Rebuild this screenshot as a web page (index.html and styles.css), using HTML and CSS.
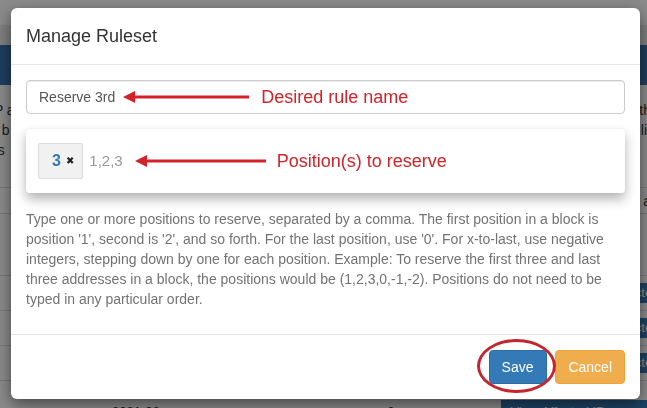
FILE: index.html
```html
<!DOCTYPE html>
<html lang="en">
<head>
    <meta charset="UTF-8">
    <meta name="viewport" content="width=device-width, initial-scale=1.0">
    <title>Manage Ruleset</title>
    <link rel="stylesheet" href="styles.css">
</head>
<body>
    <!-- page behind the modal -->
    <div class="page">
        <div class="topbar"></div>
        <div class="subbar"></div>
        <div class="navbar"></div>
        <div class="intro">
            <div class="intro-line"><span class="cut-left">IP a</span><span class="cut-right">th</span></div>
            <div class="intro-line"><span class="cut-left">   b</span><span class="cut-right li">li</span></div>
            <div class="intro-line"><span class="cut-left">es</span><span></span></div>
        </div>
        <div class="table">
            <div class="row row-head"><span></span><span class="cell-right">a</span></div>
            <div class="row row-tall"></div>
            <div class="row"><span></span><span class="view-btn">View Affected IP Blocks</span></div>
            <div class="row"><span></span><span class="view-btn">View Affected IP Blocks</span></div>
            <div class="row"><span></span><span class="view-btn">View Affected IP Blocks</span></div>
            <div class="row row-last">
                <span class="date">2021-08-10T17:04:15+0000</span>
                <span class="count">2</span>
                <span class="view-btn">View Affected IP Blocks</span>
            </div>
        </div>
    </div>

    <div class="backdrop"></div>

    <div class="modal">
        <div class="modal-dialog">
            <div class="modal-header">
                <h4 class="modal-title">Manage Ruleset</h4>
            </div>
            <div class="modal-body">
                <div class="form-control">
                    <span class="value">Reserve 3rd</span>
                    <svg class="arrow arrow-name" width="126" height="14" viewBox="0 0 126 14">
                        <polygon points="0,7 12,1 12,13" fill="#d2232a"/>
                        <rect x="10" y="5.5" width="116" height="3" fill="#d2232a"/>
                    </svg>
                    <span class="note">Desired rule name</span>
                </div>

                <div class="tag-box">
                    <span class="tag"><span class="tag-num">3</span><span class="tag-x">✖</span></span>
                    <span class="tag-input">1,2,3</span>
                    <svg class="arrow arrow-pos" width="131" height="14" viewBox="0 0 131 14">
                        <polygon points="0,7 12,1 12,13" fill="#d2232a"/>
                        <rect x="10" y="5.5" width="121" height="3" fill="#d2232a"/>
                    </svg>
                    <span class="note note-pos">Position(s) to reserve</span>
                </div>

                <p class="help-block">Type one or more positions to reserve, separated by a comma. The first position in a block is position '1', second is '2', and so forth. For the last position, use '0'. For x-to-last, use negative integers, stepping down by one for each position. Example: To reserve the first three and last three addresses in a block, the positions would be (1,2,3,0,-1,-2). Positions do not need to be typed in any particular order.</p>
            </div>
            <div class="modal-footer">
                <span class="save-wrap">
                    <button type="button" class="btn btn-primary">Save</button>
                    <span class="circle"></span>
                </span>
                <button type="button" class="btn btn-warning">Cancel</button>
            </div>
        </div>
    </div>
</body>
</html>
```

FILE: styles.css
```css
* { box-sizing: border-box; }
html, body { margin: 0; height: 100%; overflow: hidden; }
body { font-family: "Liberation Sans", Arial, sans-serif; font-size: 14px; line-height: 20px; color: #333; background: #fff; }

/* page behind */
.page { width: 647px; }
.topbar { height: 25px; background: #fff; }
.subbar { height: 20px; background: #ececec; }
.navbar { height: 40px; background: #3873b0; }
.intro { padding-top: 15px; }
.intro-line { display: flex; justify-content: space-between; height: 20px; white-space: pre; }
.cut-left { margin-left: -10px; }
.cut-right { margin-right: -4px; }
.cut-right.li { margin-right: 0; }
.table { margin-top: 27px; border-top: 1px solid #ddd; }
.row { display: flex; justify-content: space-between; align-items: center; height: 35px; border-bottom: 1px solid #ddd; }
.row-head { height: 26px; }
.row-tall { height: 62px; }
.row-last { height: 45px; border-bottom: none; justify-content: flex-start; align-items: flex-start; padding-top: 19px; }
.cell-right { margin-right: -4px; color: #333; }
.view-btn { background: #337ab7; color: #fff; font-size: 13px; padding: 0 10px; height: 20px; line-height: 20px; margin-right: -80px; }
.date { margin-left: 112px; font-size: 13px; line-height: 24px; }
.count { margin-left: 125px; font-size: 13px; line-height: 24px; }
.row-last .view-btn { margin-left: 106px; margin-right: 0; height: 24px; line-height: 24px; }

.backdrop { position: fixed; inset: 0; background: rgba(0, 0, 0, 0.46); }

/* modal */
.modal { position: fixed; inset: 0; }
.modal-dialog { width: 629px; margin: 8px 0 0 11px; background: #fff; border-radius: 6px; box-shadow: 0 5px 15px rgba(0, 0, 0, 0.5); }
.modal-header { padding: 15px; border-bottom: 1px solid #e5e5e5; }
.modal-title { margin: 0; font-size: 18px; font-weight: normal; line-height: 26px; color: #333; }
.modal-body { padding: 15px; }

.form-control { display: flex; align-items: center; height: 34px; padding: 0 12px; border: 1px solid #ccc; border-radius: 4px; box-shadow: inset 0 1px 1px rgba(0, 0, 0, 0.075); color: #555; }
.arrow { display: block; flex: none; }
.arrow-name { margin-left: 8px; }
.note { color: #d2232a; font-size: 18px; margin-left: 12px; }

.tag-box { display: flex; align-items: center; height: 64px; margin-top: 15px; padding: 0 12px; background: #fff; border-radius: 3px; box-shadow: 0 0 1px rgba(0, 0, 0, 0.15), 0 6px 12px rgba(0, 0, 0, 0.3); }
.tag { display: flex; align-items: center; height: 36px; padding: 0 8px 0 13px; background: #f1f1f1; border: 1px solid #dcdcdc; border-radius: 2px; }
.tag-num { color: #337ab7; font-weight: bold; font-size: 16px; }
.tag-x { font-family: "DejaVu Sans", sans-serif; font-size: 10px; color: #222; margin-left: 5px; }
.tag-input { color: #999; font-size: 15px; margin-left: 6px; }
.arrow-pos { margin-left: 12px; }
.note-pos { margin-left: 11px; }

.help-block { margin: 16px 0 10px; color: #737373; }

.modal-footer { padding: 15px; border-top: 1px solid #e5e5e5; text-align: right; }
.save-wrap { position: relative; display: inline-block; }
.btn { font-family: inherit; font-size: 14px; line-height: 20px; padding: 6px 12px; border: 1px solid transparent; border-radius: 4px; color: #fff; cursor: pointer; vertical-align: middle; }
.btn-primary { background: #337ab7; border-color: #2e6da4; }
.btn-warning { background: #f0ad4e; border-color: #eea236; margin-left: 5px; }
.circle { position: absolute; left: -12px; top: -11px; width: 79px; height: 54px; border: 3px solid #c5262e; border-radius: 50%; pointer-events: none; }
```
